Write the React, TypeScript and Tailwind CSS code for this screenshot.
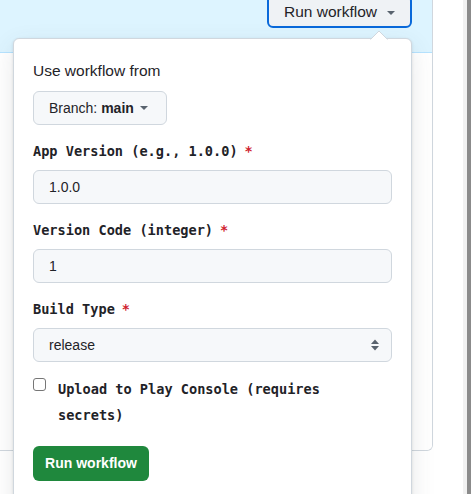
import React from "react";

const sans = { fontFamily: '"Liberation Sans", Arial, sans-serif' };
const mono = { fontFamily: '"DejaVu Sans Mono", "Liberation Mono", monospace' };

function Caret({ className }: { className?: string }) {
  return (
    <svg width="8" height="4" viewBox="0 0 8 4" className={className}>
      <path d="M0 0 L8 0 L4 4 Z" fill="currentColor" />
    </svg>
  );
}

function Label({ text }: { text: string }) {
  return (
    <div className="flex items-center h-[20px] text-[13.6px] font-bold text-[#1f2328]" style={mono}>
      <span>{text}</span>
      <span className="ml-[7px] text-[#cf222e]">*</span>
    </div>
  );
}

function Input({ value }: { value: string }) {
  return (
    <div className="mt-[9px] h-[34px] w-full rounded-[6px] border border-[#d0d7de] bg-[#f6f8fa] pl-[15px] flex items-center text-[14px] text-[#1f2328]">
      {value}
    </div>
  );
}

export default function App() {
  return (
    <div className="relative w-[471px] h-[494px] overflow-hidden bg-white" style={sans}>
      <div className="flex h-full">
        <div className="w-[433px] h-[451px] border-r border-b border-[#d0d7de] rounded-br-[6px] flex flex-col overflow-hidden">
          <div className="h-[53px] bg-[#ddf4ff] border-b border-[#b6e3ff] flex justify-end pr-[20px]">
            <div className="-mt-[5px] h-[33px] w-[145px] rounded-[6px] border-2 border-[#0969da] bg-[#eff2f5] flex items-center justify-center gap-[10px] text-[15.5px] text-[#1f2328]">
              <span>Run workflow</span>
              <Caret className="text-[#59636e] mt-[2px]" />
            </div>
          </div>
          <div className="flex-1 bg-white" />
        </div>
        <div className="flex-1 bg-white" />
        <div className="w-[4px] bg-[#f1f1f1]" />
        <div className="w-[4px] bg-[#8b8b8b]" />
      </div>

      <div className="absolute left-[13px] top-[38px] w-[399px] h-[480px] rounded-[6px] border border-[#d0d7de] bg-white shadow-[0_1px_3px_rgba(31,35,40,0.12),0_8px_24px_rgba(66,74,83,0.12)] px-[19px] pt-[22px]">
        <svg width="18" height="10" viewBox="0 0 18 10" className="absolute left-[356px] -top-[9px]">
          <path d="M0 10 L9 1 L18 10" fill="white" stroke="#d0d7de" strokeWidth="1" />
          <rect x="0" y="9.5" width="18" height="1" fill="white" />
        </svg>
        <div className="h-[20px] flex items-center text-[15.5px] text-[#1f2328]">Use workflow from</div>
        <div className="mt-[10px] h-[34px] w-[134px] rounded-[6px] border border-[#d0d7de] bg-[#f6f8fa] flex items-center pl-[15px] text-[14px] text-[#1f2328]">
          <span>Branch:&nbsp;</span>
          <span className="font-bold">main</span>
          <Caret className="ml-[6px] text-[#59636e]" />
        </div>

        <div className="mt-[16px]">
          <Label text="App Version (e.g., 1.0.0)" />
          <Input value="1.0.0" />
        </div>
        <div className="mt-[16px]">
          <Label text="Version Code (integer)" />
          <Input value="1" />
        </div>
        <div className="mt-[16px]">
          <Label text="Build Type" />
          <div className="mt-[9px] h-[34px] w-full rounded-[6px] border border-[#d0d7de] bg-[#f6f8fa] pl-[15px] pr-[11px] flex items-center justify-between text-[14px] text-[#1f2328]">
            <span>release</span>
            <svg width="10" height="14" viewBox="0 0 10 14">
              <path d="M1 6 L5 1.5 L9 6 Z" fill="#59636e" />
              <path d="M1 8 L5 12.5 L9 8 Z" fill="#59636e" />
            </svg>
          </div>
        </div>

        <div className="mt-[13px] flex items-start">
          <div className="mt-[3px] w-[13px] h-[13px] rounded-[3px] border border-[#767676] bg-white shrink-0" />
          <div className="ml-[12px] mt-[1px] text-[13.6px] font-bold leading-[26px] text-[#1f2328]" style={mono}>
            Upload to Play Console (requires
            <br />
            secrets)
          </div>
        </div>

        <div className="mt-[18px] h-[35px] w-[116px] rounded-[6px] bg-[#1f883d] flex items-center justify-center text-[14px] font-bold text-white">
          Run workflow
        </div>
      </div>
    </div>
  );
}
